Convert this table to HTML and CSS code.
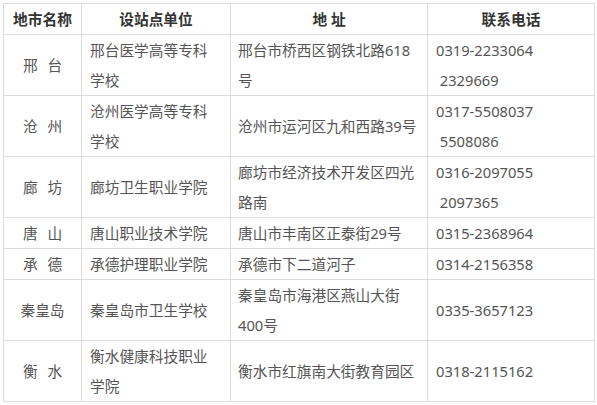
FILE: index.html
```html
<!DOCTYPE html>
<html lang="zh-CN">
<head>
<meta charset="utf-8">
<title>设站点单位</title>
<link rel="stylesheet" href="styles.css">
</head>
<body>
<table class="sites">
  <colgroup>
    <col class="c-city">
    <col class="c-unit">
    <col class="c-addr">
    <col class="c-tel">
  </colgroup>
  <thead>
    <tr>
      <th>地市名称</th>
      <th>设站点单位</th>
      <th>地 址</th>
      <th>联系电话</th>
    </tr>
  </thead>
  <tbody>
    <tr>
      <td class="city"><span class="spaced">邢 台</span></td>
      <td class="unit">邢台医学高等专科学校</td>
      <td class="addr">邢台市桥西区钢铁北路618号</td>
      <td class="tel">0319-2233064<br>&nbsp;2329669</td>
    </tr>
    <tr>
      <td class="city"><span class="spaced">沧 州</span></td>
      <td class="unit">沧州医学高等专科学校</td>
      <td class="addr">沧州市运河区九和西路39号</td>
      <td class="tel">0317-5508037<br>&nbsp;5508086</td>
    </tr>
    <tr>
      <td class="city"><span class="spaced">廊 坊</span></td>
      <td class="unit">廊坊卫生职业学院</td>
      <td class="addr">廊坊市经济技术开发区四光路南</td>
      <td class="tel">0316-2097055<br>&nbsp;2097365</td>
    </tr>
    <tr>
      <td class="city"><span class="spaced">唐 山</span></td>
      <td class="unit">唐山职业技术学院</td>
      <td class="addr">唐山市丰南区正泰街29号</td>
      <td class="tel">0315-2368964</td>
    </tr>
    <tr>
      <td class="city"><span class="spaced">承 德</span></td>
      <td class="unit">承德护理职业学院</td>
      <td class="addr">承德市下二道河子</td>
      <td class="tel">0314-2156358</td>
    </tr>
    <tr>
      <td class="city">秦皇岛</td>
      <td class="unit">秦皇岛市卫生学校</td>
      <td class="addr">秦皇岛市海港区燕山大街400号</td>
      <td class="tel">0335-3657123</td>
    </tr>
    <tr>
      <td class="city"><span class="spaced">衡 水</span></td>
      <td class="unit">衡水健康科技职业学院</td>
      <td class="addr">衡水市红旗南大街教育园区</td>
      <td class="tel">0318-2115162</td>
    </tr>
  </tbody>
</table>
</body>
</html>
```

FILE: styles.css
```css
html, body {
  margin: 0;
  padding: 0;
  background: #ffffff;
}

body {
  font-family: "Noto Sans", "Noto Sans CJK SC", sans-serif;
  font-size: 14.7px;
  color: #555555;
}

.sites {
  margin: 3px 0 0 3px;
  width: 591px;
  border-collapse: collapse;
  table-layout: fixed;
}

.c-city { width: 78px; }
.c-unit { width: 149px; }
.c-addr { width: 197px; }
.c-tel  { width: 167px; }

.sites th,
.sites td {
  border: 1px solid #dcdcdc;
  padding: 0 8px;
  line-height: 30px;
  vertical-align: middle;
  word-break: normal;
}

.sites th {
  font-weight: bold;
  color: #333333;
  text-align: center;
}

.sites td.city {
  text-align: center;
  padding: 0 4px;
}

.sites td.unit {
  text-align: left;
  padding: 0 14px 0 8px;
}

.sites td.addr {
  text-align: left;
  padding: 0 6px 0 7px;
}

.sites td.tel {
  text-align: left;
  padding: 0 8px 0 8px;
}

.spaced {
  word-spacing: 6px;
}
```
